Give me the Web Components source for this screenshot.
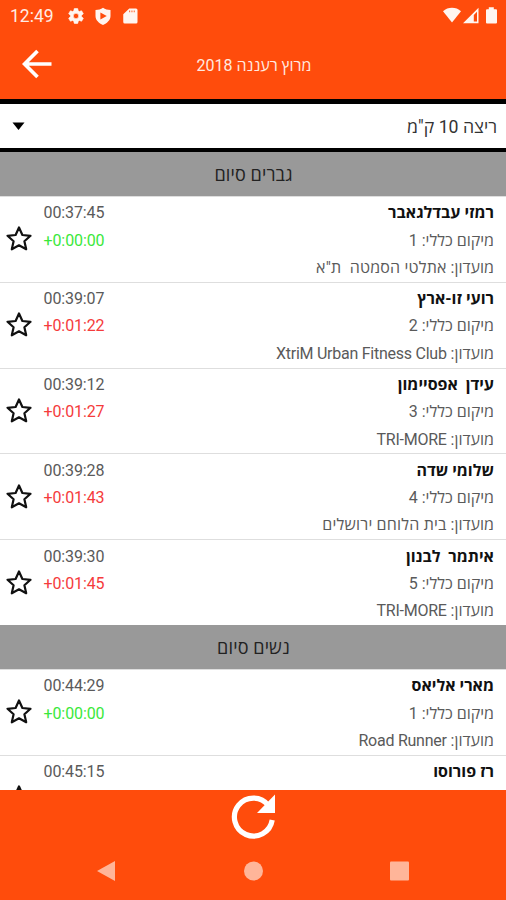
<!DOCTYPE html>
<html lang="he">
<head>
<meta charset="UTF-8">
<meta name="viewport" content="width=device-width, initial-scale=1">
<title>מרוץ רעננה 2018</title>
<style>
    body {
        margin: 0;
        font-family: Roboto, "Open Sans", "Noto Sans", sans-serif;
        background: #fff;
    }
</style>
</head>
<body>
<race-app>
    <status-bar slot="top" time="12:49"></status-bar>
    <title-bar slot="top">מרוץ רעננה 2018</title-bar>
    <race-select slot="top">ריצה 10 ק"מ</race-select>
</race-app>

<script>
// Shared helper: every element keeps its markup and styles in an open shadow root
class BaseElement extends HTMLElement {
    constructor() {
        super();
        this.attachShadow({ mode: 'open' });
    }
    connectedCallback() {
        this.shadowRoot.innerHTML = this.render();
    }
}

class StatusBar extends BaseElement {
    render() {
        return `
        <style>
            :host {
                display: flex;
                align-items: center;
                height: 32px;
                padding: 0 8px 0 10px;
                background: #ff4c0c;
                color: #ffece4;
                font-size: 17.5px;
            }
            .time { width: 57px; }
            svg { display: block; fill: #fff5f0; }
            .left { display: flex; gap: 9px; flex: 1; margin-top: -1px; }
            .right { display: flex; margin-top: -1px; }
        </style>
        <span class="time">${this.getAttribute('time')}</span>
        <div class="left">
            <svg width="18" height="18" viewBox="0 0 24 24"><path d="M19.4 13a7.5 7.5 0 0 0 0-2l2.1-1.65a.5.5 0 0 0 .12-.64l-2-3.46a.5.5 0 0 0-.61-.22l-2.49 1a7.3 7.3 0 0 0-1.69-.98l-.38-2.65A.5.5 0 0 0 14 2h-4a.5.5 0 0 0-.49.42l-.38 2.65c-.61.25-1.17.59-1.69.98l-2.49-1a.5.5 0 0 0-.61.22l-2 3.46a.5.5 0 0 0 .12.64L4.57 11a7.9 7.9 0 0 0 0 2l-2.11 1.65a.5.5 0 0 0-.12.64l2 3.46c.12.22.39.3.61.22l2.49-1c.52.4 1.08.73 1.69.98l.38 2.65c.03.24.24.42.49.42h4c.25 0 .46-.18.49-.42l.38-2.65c.61-.25 1.17-.59 1.69-.98l2.49 1c.23.09.49 0 .61-.22l2-3.46a.5.5 0 0 0-.12-.64zM12 15.600a3.600 3.600 0 1 1 0-7.200 3.600 3.600 0 0 1 0 7.200z" stroke="#fff5f0" stroke-width=".8"/></svg>
            <svg width="18" height="18" viewBox="0 0 24 24"><path fill-rule="evenodd" d="M12 1C9 3 6 4 2 4v8c0 5.500 4.500 9.500 10 12 5.500-2.500 10-6.500 10-12V4c-4 0-7-1-10-3zM8.500 7.200 17 12l-8.500 4.800z"/></svg>
            <svg width="18" height="18" viewBox="0 0 24 24"><path fill-rule="evenodd" d="M20 2h-9L3 9.500V20a2 2 0 0 0 2 2h15a2 2 0 0 0 2-2V4a2 2 0 0 0-2-2zM11 4.500h1.200v2.500h-1.200zm3 0h1.200v2.500h-1.200zm3 0h1.200v2.500h-1.200z"/></svg>
        </div>
        <div class="right">
            <svg width="55" height="18" viewBox="0 0 55 18">
                <path d="M0 4.200C5-.3 13-.3 18 4.200L9 15.500z"/>
                <path fill-rule="evenodd" d="M20 16.300 35.500.8v15.500zm10.800-1.700H34V4.800l-3.200 3.300z"/>
                <path d="M45.800.2h5v2H53q1 0 1 1V15.500q0 1-1 1h-9q-1 0-1-1V3.200q0-1 1-1h1.800z"/>
            </svg>
        </div>`;
    }
}

class TitleBar extends BaseElement {
    render() {
        return `
        <style>
            :host {
                display: grid;
                grid-template-columns: 74px 1fr 74px;
                align-items: center;
                height: 66.5px;
                box-sizing: border-box;
                background: #ff4c0c;
                color: #ffe9e0;
            }
            svg { display: block; margin: -2px 0 0 22px; }
            .title {
                direction: rtl;
                text-align: center;
                font-size: 16px;
                line-height: 24px;
                margin: 1px 0 0 2px;
                white-space: nowrap;
            }
        </style>
        <svg width="31" height="30" viewBox="0 0 31 30"><path d="M15.500 2 2.500 15l13 13M2.500 15H29.500" fill="none" stroke="#fff" stroke-width="3.700"/></svg>
        <div class="title"><slot></slot></div>`;
    }
}

class RaceSelect extends BaseElement {
    render() {
        return `
        <style>
            :host {
                display: flex;
                align-items: center;
                justify-content: space-between;
                height: 53.5px;
                box-sizing: border-box;
                padding: 0 9px 0 12px;
                border-top: 5px solid #000;
                border-bottom: 4px solid #000;
                background: #fff;
                color: #333;
                font-size: 17.7px;
            }
            svg { margin-top: 1px; }
            .label { direction: rtl; white-space: nowrap; }
        </style>
        <svg width="13" height="9" viewBox="0 0 13 9"><path d="M.5.5h12L6.500 8z"/></svg>
        <span class="label"><slot></slot></span>`;
    }
}

class GroupHeader extends BaseElement {
    render() {
        return `
        <style>
            :host {
                display: flex;
                align-items: center;
                justify-content: center;
                height: 44px;
                background: #999;
                color: #222;
                font-size: 18px;
                direction: rtl;
            }
            span { letter-spacing: 0.15px; padding-left: 1px; }
        </style>
        <span><slot></slot></span>`;
    }
}

class ResultRow extends BaseElement {
    render() {
        const gap = this.getAttribute('gap');
        const place = this.getAttribute('place');
        const club = this.getAttribute('club');
        const color = gap === '+0:00:00' ? '#3be83b' : '#f53b3b';
        return `
        <style>
            :host {
                display: grid;
                grid-template-columns: 43.5px 1fr auto;
                height: 85.8px;
                box-sizing: border-box;
                padding: 2.4px 12px 0 0;
                border-top: 1px solid #dedede;
                background: #fff;
                color: #5a5a5a;
                font-size: 16px;
                line-height: 27.3px;
            }
            .star { display: block; margin: 25px 0 0 5px; }
            .time, .gap { letter-spacing: -0.1px; }
            .gap { color: ${color}; }
            .info { direction: rtl; }
            .info div { white-space: pre; }
            .name { color: #111; font-weight: 700; }
            .latin { letter-spacing: -0.25px; }
            .hebrew { letter-spacing: 0.2px; }
        </style>
        <svg class="star" width="28" height="28" viewBox="0 0 28 28"><path d="m14 3.500 3.400 7.500 8.100.8-6.100 5.500 1.800 8L14 21.300l-7.200 4 1.800-8-6.100-5.500 8.100-.8z" fill="none" stroke="#111" stroke-width="2.200" stroke-linejoin="round"/></svg>
        <div class="times">
            <div class="time">${this.getAttribute('time')}</div>
            ${gap ? `<div class="gap">${gap}</div>` : ''}
        </div>
        <div class="info">
            <div class="name"><slot></slot></div>
            ${place ? `<div class="place">מיקום כללי: ${place}</div>` : ''}
            ${club ? `<div class="club">מועדון: <bdi class="${/[A-Z]/.test(club) ? 'latin' : 'hebrew'}">${club}</bdi></div>` : ''}
        </div>`;
    }
}

class BottomBar extends BaseElement {
    render() {
        return `
        <style>
            :host {
                display: flex;
                flex-direction: column;
                align-items: center;
                height: 110px;
                background: #ff4c0c;
            }
            .refresh { display: block; margin-top: 3px; }
            .nav {
                display: flex;
                justify-content: space-between;
                width: 312px;
                margin-top: 21px;
            }
            .nav svg { display: block; fill: #ffb599; }
        </style>
        <svg class="refresh" width="46" height="46" viewBox="0 0 46 46">
            <path d="M42.200 27A19 19 0 1 1 38.500 12.500" fill="none" stroke="#fff" stroke-width="5.200"/>
            <path d="M45 1.500V20H27z" fill="#fff"/>
        </svg>
        <div class="nav">
            <svg width="19" height="22" viewBox="0 0 19 22"><path d="M18 1v20L0 11z"/></svg>
            <svg width="20" height="22" viewBox="0 0 20 22"><circle cx="10.500" cy="11" r="9.500"/></svg>
            <svg width="19" height="22" viewBox="0 0 19 22"><rect y="1.500" width="19" height="19" rx="1"/></svg>
        </div>`;
    }
}

class RaceApp extends BaseElement {
    render() {
        const groups = [
            { title: 'גברים סיום', rows: [
                ['רמזי עבדלגאבר', '00:37:45', '+0:00:00', 1, 'אתלטי הסמטה  ת"א'],
                ['רועי זו-ארץ', '00:39:07', '+0:01:22', 2, 'XtriM Urban Fitness Club'],
                ['עידן  אפסיימון', '00:39:12', '+0:01:27', 3, 'TRI-MORE'],
                ['שלומי שדה', '00:39:28', '+0:01:43', 4, 'בית הלוחם ירושלים'],
                ['איתמר  לבנון', '00:39:30', '+0:01:45', 5, 'TRI-MORE']
            ] },
            { title: 'נשים סיום', rows: [
                ['מארי אליאס', '00:44:29', '+0:00:00', 1, 'Road Runner'],
                ['רז פורוסו', '00:45:15', '', '', '']
            ] }
        ];
        const list = groups.map(g => `<group-header>${g.title}</group-header>` +
            g.rows.map(([name, time, gap, place, club]) =>
                `<result-row time="${time}" gap="${gap}" place="${place}" club="${club.replace(/"/g, '&quot;')}">${name}</result-row>`
            ).join('')).join('');
        return `
        <style>
            :host {
                display: flex;
                flex-direction: column;
                height: 900px;
                overflow: hidden;
            }
            .list { flex: 1; min-height: 0; overflow: hidden; }
        </style>
        <slot name="top"></slot>
        <div class="list">${list}</div>
        <bottom-bar></bottom-bar>`;
    }
}

customElements.define('status-bar', StatusBar);
customElements.define('title-bar', TitleBar);
customElements.define('race-select', RaceSelect);
customElements.define('group-header', GroupHeader);
customElements.define('result-row', ResultRow);
customElements.define('bottom-bar', BottomBar);
customElements.define('race-app', RaceApp);
</script>
</body>
</html>
